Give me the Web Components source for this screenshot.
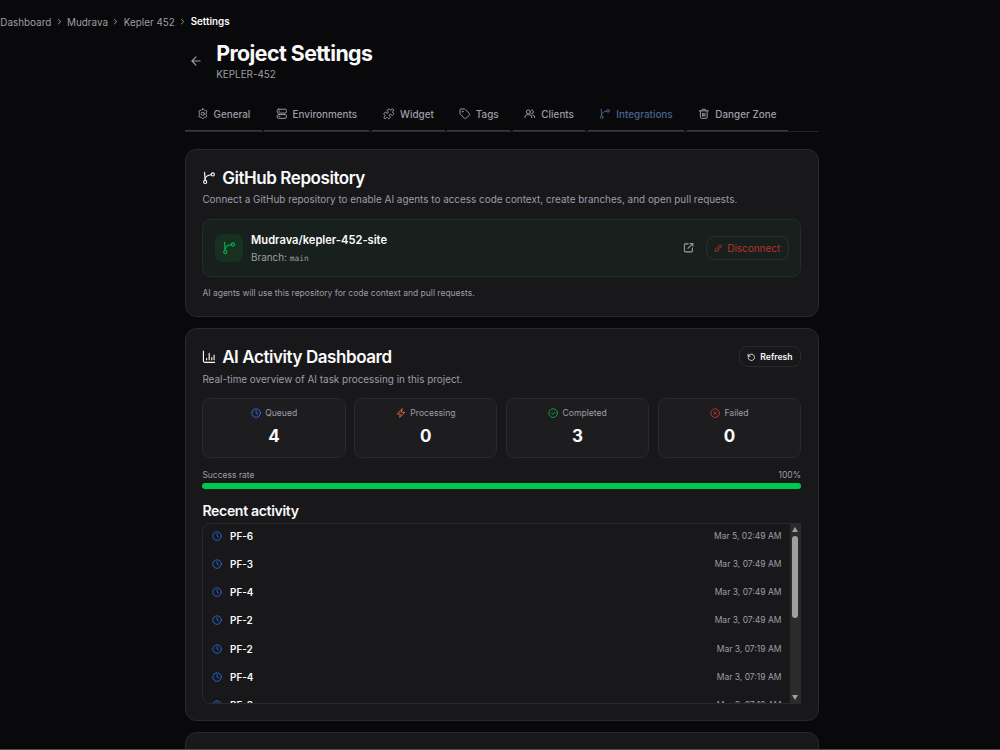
<!DOCTYPE html>
<html lang="en">
<head>
<meta charset="UTF-8">
<title>Project Settings</title>
<style>
    body{
        margin: 0;
        height: 750px;
        display: flex;
        flex-direction: column;
        overflow: hidden;
        background: #09090b;
        color: #fafafa;
        font-family: Inter, "Liberation Sans", sans-serif;
        --muted: #9d9da4;
        --line: #2a2a2d;
        --card: #18181b;
    }
</style>
</head>
<body>
<settings-page></settings-page>

<script>
const icons = {
    chevron: '<path d="m9 18 6-6-6-6"/>',
    back: '<path d="m12 19-7-7 7-7M19 12H5"/>',
    gear: '<path d="M12 1.8c1.500 0 2 2.300 3.400 3 1.400.8 3.500-.2 4.400 1.200.9 1.500-.8 3.100-.8 4.700v2.600c0 1.600 1.700 3.200.8 4.700-.9 1.400-3 .4-4.400 1.200-1.400.7-1.900 3-3.400 3s-2-2.300-3.400-3c-1.400-.8-3.500.2-4.400-1.200-.9-1.500.8-3.100.8-4.700v-2.600c0-1.600-1.700-3.200-.8-4.700.9-1.400 3-.4 4.400-1.200 1.400-.7 1.900-3 3.400-3z"/><circle cx="12" cy="12" r="3.3"/>',
    server: '<rect x="2.5" y="2.5" width="19" height="8" rx="2.5"/><rect x="2.5" y="13.5" width="19" height="8" rx="2.5"/><path d="M6 6.5h2M6 17.5h2"/>',
    puzzle: '<path d="M15.39 4.39a1 1 0 0 0 1.68-.474 2.5 2.5 0 1 1 3.014 3.015 1 1 0 0 0-.474 1.68l1.683 1.682a2.414 2.414 0 0 1 0 3.414L19.61 15.39a1 1 0 0 1-1.68-.474 2.5 2.5 0 1 0-3.014 3.015 1 1 0 0 1 .474 1.68l-1.683 1.682a2.414 2.414 0 0 1-3.414 0L8.61 19.61a1 1 0 0 0-1.68.474 2.5 2.5 0 1 1-3.014-3.015 1 1 0 0 0 .474-1.68l-1.683-1.682a2.414 2.414 0 0 1 0-3.414L4.39 8.61a1 1 0 0 1 1.68.474 2.5 2.5 0 1 0 3.014-3.015 1 1 0 0 1-.474-1.68l1.683-1.682a2.414 2.414 0 0 1 3.414 0z"/>',
    tag: '<path d="M12.6 2.6A2 2 0 0 0 11.2 2H4a2 2 0 0 0-2 2v7.2a2 2 0 0 0 .6 1.4l8.7 8.7a2.4 2.4 0 0 0 3.4 0l6.6-6.6a2.4 2.4 0 0 0 0-3.4z"/><circle cx="7.5" cy="7.5" r=".9"/>',
    users: '<circle cx="9" cy="8" r="4"/><path d="M2 20v-1.5A4.5 4.5 0 0 1 6.5 14h5a4.5 4.5 0 0 1 4.5 4.5V20M15.5 4a4 4 0 0 1 0 8M18.5 14.5a4 4 0 0 1 3.5 4V20"/>',
    branch: '<path d="M4.500 2.500 5.500 16"/><circle cx="5.500" cy="19" r="2.700"/><circle cx="18.800" cy="6" r="2.700"/><path d="M16 6.500C10.500 7 6 9.500 5.300 14"/>',
    trash: '<path d="M5 6v13a2.5 2.5 0 0 0 2.5 2.5h9A2.5 2.5 0 0 0 19 19V6M2.5 6h19M8 5.5l1-3h6l1 3M9.5 11v6M12 11v6M14.5 11v6"/>',
    external: '<path d="M11 4H5a2 2 0 0 0-2 2v13a2 2 0 0 0 2 2h13a2 2 0 0 0 2-2v-6M15 3h6v6M10.5 13.5 20.5 3.5"/>',
    unplug: '<path d="m2.5 21.5 3-3M21.5 2.5l-3 3"/><path d="M7 10.5 4.500 13a4 4 0 0 0 6.500 6.500l2.500-2.500zM9 12.500l2-2M11.500 15l2-2"/><path d="M13 6.500 17.500 11 20 8.500A3.500 3.500 0 0 0 15.500 4z"/>',
    chart: '<path d="M2.5 2v17a2.5 2.5 0 0 0 2.5 2.5h17M8 17v-2M12.5 17V6M17 17v-4M21 17V9"/>',
    refresh: '<path d="M3.5 9A9 9 0 1 1 3 13M3 3v6h6"/>',
    clock: '<circle cx="12" cy="12" r="10"/><path d="M12 6.5V12l3.5 2"/>',
    bolt: '<path d="M14 2 3 14h7l-1.5 8L21 10h-8z"/>',
    check: '<circle cx="12" cy="12" r="10"/><path d="m8.5 12.5 2.5 2 4.5-4.5"/>',
    cross: '<circle cx="12" cy="12" r="10"/><path d="m9 9 6 6M15 9l-6 6"/>'
}

class UiIcon extends HTMLElement{
    connectedCallback(){
        const size = this.getAttribute("size") || 12
        this.attachShadow({mode:"open"}).innerHTML = `
        <style>
            :host{
                display: block;
                flex: none;
                width: ${size}px;
                height: ${size}px;
            }
            svg{
                display: block;
                width: 100%;
                height: 100%;
                overflow: visible;
                fill: none;
                stroke: currentColor;
                stroke-width: ${this.getAttribute("stroke") || 2.2};
                stroke-linecap: round;
                stroke-linejoin: round;
            }
        </style>
        <svg viewBox="0 0 24 24">${icons[this.getAttribute("name")]}</svg>
        `
    }
}
customElements.define("ui-icon", UiIcon)

class CrumbTrail extends HTMLElement{
    connectedCallback(){
        const items = this.getAttribute("items").split("|")
        this.attachShadow({mode:"open"}).innerHTML = `
        <style>
            :host{
                display: flex;
                align-items: center;
                gap: 3.3px;
                height: 14px;
                padding: 15px 0 0 0.3px;
                font-size: 9.9px;
                line-height: 14px;
                color: var(--muted);
            }
            span:last-child{
                color: #fafafa;
                font-size: 9.8px;
                font-weight: 600;
            }
        </style>
        ${items.map(i => `<span>${i}</span>`).join('<ui-icon name="chevron" size="9.2" stroke="2.5"></ui-icon>')}
        `
    }
}
customElements.define("crumb-trail", CrumbTrail)

class PageHeading extends HTMLElement{
    connectedCallback(){
        this.attachShadow({mode:"open"}).innerHTML = `
        <style>
            :host{
                display: flex;
                align-items: center;
                gap: 12.8px;
                height: 42px;
                padding: 11px 0 0 4.2px;
            }
            ui-icon{
                color: var(--muted);
            }
            h1{
                margin: -2px 0 1px;
                font-size: 21.3px;
                line-height: 26px;
                font-weight: 700;
                letter-spacing: -0.53px;
            }
            p{
                margin: 0;
                font-size: 9.9px;
                line-height: 14px;
                color: var(--muted);
            }
        </style>
        <ui-icon name="back" size="14" stroke="2"></ui-icon>
        <div>
            <h1><slot></slot></h1>
            <p>${this.getAttribute("code")}</p>
        </div>
        `
    }
}
customElements.define("page-heading", PageHeading)

class TabItem extends HTMLElement{
    connectedCallback(){
        this.attachShadow({mode:"open"}).innerHTML = `
        <style>
            :host{
                display: flex;
                align-items: center;
                gap: 5.4px;
                box-sizing: border-box;
                width: ${this.getAttribute("w")}px;
                padding-left: 11.4px;
                border-bottom: 1.5px solid #3b3b3f;
                box-shadow: 0 1px 0 #29292c;
                color: var(--muted);
                font-size: 9.9px;
                font-weight: 500;
                white-space: nowrap;
            }
            :host([active]){
                color: #47658f;
            }
        </style>
        <ui-icon name="${this.getAttribute("icon")}" size="11.6" stroke="2"></ui-icon>
        <slot></slot>
        `
    }
}
customElements.define("tab-item", TabItem)

class TabBar extends HTMLElement{
    connectedCallback(){
        this.attachShadow({mode:"open"}).innerHTML = `
        <style>
            :host{
                display: flex;
                gap: 2.5px;
                box-sizing: border-box;
                height: 34px;
                margin-top: 16px;
                padding-bottom: 1px;
                background: linear-gradient(#242427, #242427) bottom / 100% 1px no-repeat;
            }
        </style>
        <slot></slot>
        `
    }
}
customElements.define("tab-bar", TabBar)

class SettingsCard extends HTMLElement{
    connectedCallback(){
        this.attachShadow({mode:"open"}).innerHTML = `
        <style>
            :host{
                display: block;
                box-sizing: border-box;
                height: ${this.getAttribute("h")}px;
                padding: 15.5px 16.7px 0 16.2px;
                background: var(--card);
                border: 1px solid var(--line);
                border-radius: 11.5px;
            }
            header{
                display: flex;
                align-items: center;
                gap: 6px;
                height: 24px;
            }
            h2{
                flex: 1;
                margin: 0;
                font-size: 17px;
                line-height: 24px;
                font-weight: 600;
                letter-spacing: -0.43px;
            }
            p{
                margin: 2.9px 0 12.6px;
                font-size: 9.92px;
                line-height: 14px;
                color: var(--muted);
            }
        </style>
        ${this.hasAttribute("icon") ? `
        <header>
            <ui-icon name="${this.getAttribute("icon")}" size="13.8" stroke="2"></ui-icon>
            <h2>${this.getAttribute("heading")}</h2>
            <slot name="action"></slot>
        </header>
        <p>${this.getAttribute("text")}</p>` : ""}
        <slot></slot>
        `
    }
}
customElements.define("settings-card", SettingsCard)

class PillButton extends HTMLElement{
    connectedCallback(){
        this.attachShadow({mode:"open"}).innerHTML = `
        <style>
            :host{
                display: flex;
                align-items: center;
                justify-content: center;
                gap: 4.3px;
                box-sizing: border-box;
                width: 62px;
                height: 21px;
                border: 1px solid var(--line);
                border-radius: 8px;
                font-size: 8.6px;
                font-weight: 600;
            }
            :host([danger]){
                width: 83.5px;
                height: 24px;
                border-color: #29312f;
                border-radius: 9px;
                color: #b8302a;
                font-size: 9.95px;
                font-weight: 400;
            }
        </style>
        <ui-icon name="${this.getAttribute("icon")}" size="8.6"></ui-icon>
        <slot></slot>
        `
    }
}
customElements.define("pill-button", PillButton)

class RepoRow extends HTMLElement{
    connectedCallback(){
        this.attachShadow({mode:"open"}).innerHTML = `
        <style>
            :host{
                display: flex;
                align-items: center;
                box-sizing: border-box;
                height: 58px;
                padding: 0 11px 0 11.4px;
                background: #18201d;
                border: 1px solid #242d2a;
                border-radius: 8.5px;
            }
            .badge{
                display: grid;
                place-items: center;
                width: 28px;
                height: 28px;
                margin-right: 8.3px;
                border-radius: 7px;
                background: #173022;
                color: #06b348;
            }
            .info{
                flex: 1;
                padding-top: 1.6px;
            }
            b{
                display: block;
                font-size: 11.15px;
                line-height: 17px;
                font-weight: 600;
            }
            span{
                display: block;
                font-size: 9.9px;
                line-height: 16px;
                color: var(--muted);
            }
            code{
                font: 7.9px "DejaVu Sans Mono", monospace;
            }
            .open{
                margin-right: 11px;
                color: var(--muted);
            }
        </style>
        <div class="badge"><ui-icon name="branch" size="14" stroke="2"></ui-icon></div>
        <div class="info">
            <b>${this.getAttribute("repo")}</b>
            <span>Branch: <code>${this.getAttribute("branch")}</code></span>
        </div>
        <ui-icon class="open" name="external" size="11.3"></ui-icon>
        <pill-button danger icon="unplug">Disconnect</pill-button>
        `
    }
}
customElements.define("repo-row", RepoRow)

class StatBox extends HTMLElement{
    connectedCallback(){
        this.attachShadow({mode:"open"}).innerHTML = `
        <style>
            :host{
                display: flex;
                flex-direction: column;
                align-items: center;
                box-sizing: border-box;
                padding-top: 7px;
                background: #1d1d20;
                border: 1px solid var(--line);
                border-radius: 8.5px;
            }
            div{
                display: flex;
                align-items: center;
                gap: 4px;
                height: 14px;
                font-size: 8.6px;
                color: var(--muted);
            }
            ui-icon{
                color: ${this.getAttribute("tint")};
            }
            b{
                margin-top: 4px;
                font-size: 17px;
                line-height: 24px;
                font-weight: 700;
            }
        </style>
        <div><ui-icon name="${this.getAttribute("icon")}" size="10.3"></ui-icon><slot></slot></div>
        <b>${this.getAttribute("value")}</b>
        `
    }
}
customElements.define("stat-box", StatBox)

class SuccessRate extends HTMLElement{
    connectedCallback(){
        const rate = this.getAttribute("rate")
        this.attachShadow({mode:"open"}).innerHTML = `
        <style>
            :host{
                display: block;
                margin-top: 11px;
                font-size: 8.5px;
                line-height: 12px;
                color: var(--muted);
            }
            .label{
                display: flex;
                justify-content: space-between;
            }
            .track{
                height: 5.7px;
                margin-top: 2px;
                border-radius: 3px;
                background: #27272a;
            }
            .fill{
                width: ${rate}%;
                height: 100%;
                border-radius: 3px;
                background: #00c84e;
            }
        </style>
        <div class="label"><span>Success rate</span><span>${rate}%</span></div>
        <div class="track"><div class="fill"></div></div>
        `
    }
}
customElements.define("success-rate", SuccessRate)

class ActivityList extends HTMLElement{
    connectedCallback(){
        const rows = [
            ["PF-6", "Mar 5, 02:49 AM"],
            ["PF-3", "Mar 3, 07:49 AM"],
            ["PF-4", "Mar 3, 07:49 AM"],
            ["PF-2", "Mar 3, 07:49 AM"],
            ["PF-2", "Mar 3, 07:19 AM"],
            ["PF-4", "Mar 3, 07:19 AM"],
            ["PF-3", "Mar 3, 07:19 AM"]
        ]
        this.attachShadow({mode:"open"}).innerHTML = `
        <style>
            :host{
                display: flex;
                box-sizing: border-box;
                height: 181px;
                overflow: hidden;
                border: 1px solid var(--line);
                border-radius: 8.5px 0 0 8.5px;
            }
            .rows{
                flex: 1;
                padding: 0 8px 0 8.5px;
            }
            .row{
                display: flex;
                align-items: center;
                gap: 8px;
                height: 28.28px;
                font-size: 9.9px;
                font-weight: 600;
            }
            .rows .row:first-child{
                margin-top: -2.2px;
            }
            ui-icon{
                color: #2868d2;
            }
            time{
                margin-left: auto;
                font-size: 8.5px;
                font-weight: 400;
                color: var(--muted);
            }
            .bar{
                display: flex;
                flex-direction: column;
                align-items: center;
                width: 10.5px;
                background: #2b2b2c;
            }
            .up, .down{
                width: 0;
                height: 0;
                border: 3.5px solid transparent;
                border-top-width: 0;
                border-bottom: 5px solid #9f9fa1;
                margin-top: 3px;
            }
            .down{
                border-top: 5px solid #9f9fa1;
                border-bottom-width: 0;
                margin: auto 0 2.5px;
            }
            .thumb{
                width: 6.5px;
                height: 82.5px;
                margin-top: 4.2px;
                border-radius: 3.5px;
                background: #9f9fa1;
            }
        </style>
        <div class="rows">
            ${rows.map(([id, date]) => `<div class="row"><ui-icon name="clock" size="10.2"></ui-icon>${id}<time>${date}</time></div>`).join("")}
        </div>
        <div class="bar"><i class="up"></i><i class="thumb"></i><i class="down"></i></div>
        `
    }
}
customElements.define("activity-list", ActivityList)

class SettingsPage extends HTMLElement{
    connectedCallback(){
        this.attachShadow({mode:"open"}).innerHTML = `
        <style>
            :host{
                display: block;
                box-sizing: border-box;
                height: 750px;
                overflow: hidden;
                border-bottom: 1px solid #4c4c4e;
            }
            main{
                width: 633.5px;
                margin-left: 185.2px;
            }
            .cards{
                display: flex;
                flex-direction: column;
                gap: 11.3px;
                margin-top: 17px;
            }
            .note{
                margin-top: 9.7px;
                font-size: 8.5px;
                line-height: 12px;
                color: var(--muted);
            }
            .stats{
                display: grid;
                grid-template-columns: repeat(4, 1fr);
                gap: 8.5px;
                height: 60px;
            }
            h3{
                margin: 12.6px 0 4.1px;
                font-size: 14.1px;
                line-height: 17px;
                font-weight: 600;
                letter-spacing: -0.35px;
            }
        </style>
        <crumb-trail items="Dashboard|Mudrava|Kepler 452|Settings"></crumb-trail>
        <main>
            <page-heading code="KEPLER-452">Project Settings</page-heading>
            <tab-bar>
                <tab-item icon="gear" w="76.5">General</tab-item>
                <tab-item icon="server" w="105">Environments</tab-item>
                <tab-item icon="puzzle" w="73.3">Widget</tab-item>
                <tab-item icon="tag" w="63">Tags</tab-item>
                <tab-item icon="users" w="72.5">Clients</tab-item>
                <tab-item icon="branch" w="96.5" active>Integrations</tab-item>
                <tab-item icon="trash" w="101">Danger Zone</tab-item>
            </tab-bar>
            <div class="cards">
                <settings-card h="168" icon="branch" heading="GitHub Repository" text="Connect a GitHub repository to enable AI agents to access code context, create branches, and open pull requests.">
                    <repo-row repo="Mudrava/kepler-452-site" branch="main"></repo-row>
                    <div class="note">AI agents will use this repository for code context and pull requests.</div>
                </settings-card>
                <settings-card h="392.7" icon="chart" heading="AI Activity Dashboard" text="Real-time overview of AI task processing in this project.">
                    <pill-button slot="action" icon="refresh">Refresh</pill-button>
                    <div class="stats">
                        <stat-box icon="clock" tint="#2b6fe0" value="4">Queued</stat-box>
                        <stat-box icon="bolt" tint="#e8613c" value="0">Processing</stat-box>
                        <stat-box icon="check" tint="#08a643" value="3">Completed</stat-box>
                        <stat-box icon="cross" tint="#c0352b" value="0">Failed</stat-box>
                    </div>
                    <success-rate rate="100"></success-rate>
                    <h3>Recent activity</h3>
                    <activity-list></activity-list>
                </settings-card>
                <settings-card h="120"></settings-card>
            </div>
        </main>
        `
    }
}
customElements.define("settings-page", SettingsPage)
</script>
</body>
</html>
